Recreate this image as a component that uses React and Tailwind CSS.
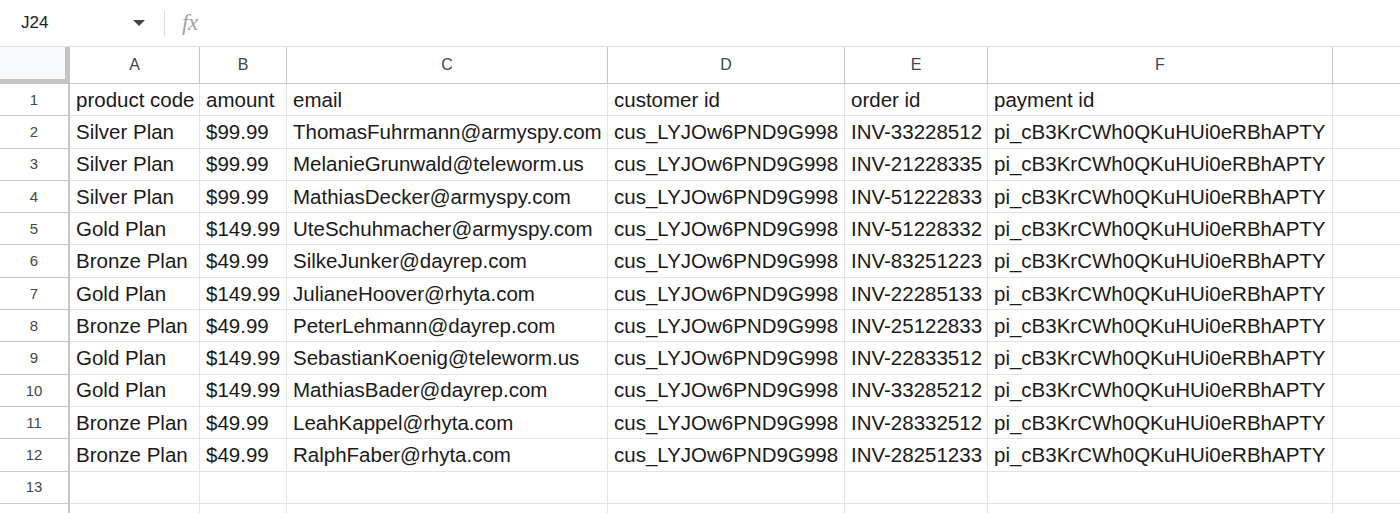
const columns = [
    { key: 'A', width: 'w-[130px]' },
    { key: 'B', width: 'w-[87px]' },
    { key: 'C', width: 'w-[321px]' },
    { key: 'D', width: 'w-[237px]' },
    { key: 'E', width: 'w-[143px]' },
    { key: 'F', width: 'w-[345px]' },
];

const rows = [
    ['product code', 'amount', 'email', 'customer id', 'order id', 'payment id'],
    ['Silver Plan', '$99.99', 'ThomasFuhrmann@armyspy.com', 'cus_LYJOw6PND9G998', 'INV-33228512', 'pi_cB3KrCWh0QKuHUi0eRBhAPTY'],
    ['Silver Plan', '$99.99', 'MelanieGrunwald@teleworm.us', 'cus_LYJOw6PND9G998', 'INV-21228335', 'pi_cB3KrCWh0QKuHUi0eRBhAPTY'],
    ['Silver Plan', '$99.99', 'MathiasDecker@armyspy.com', 'cus_LYJOw6PND9G998', 'INV-51222833', 'pi_cB3KrCWh0QKuHUi0eRBhAPTY'],
    ['Gold Plan', '$149.99', 'UteSchuhmacher@armyspy.com', 'cus_LYJOw6PND9G998', 'INV-51228332', 'pi_cB3KrCWh0QKuHUi0eRBhAPTY'],
    ['Bronze Plan', '$49.99', 'SilkeJunker@dayrep.com', 'cus_LYJOw6PND9G998', 'INV-83251223', 'pi_cB3KrCWh0QKuHUi0eRBhAPTY'],
    ['Gold Plan', '$149.99', 'JulianeHoover@rhyta.com', 'cus_LYJOw6PND9G998', 'INV-22285133', 'pi_cB3KrCWh0QKuHUi0eRBhAPTY'],
    ['Bronze Plan', '$49.99', 'PeterLehmann@dayrep.com', 'cus_LYJOw6PND9G998', 'INV-25122833', 'pi_cB3KrCWh0QKuHUi0eRBhAPTY'],
    ['Gold Plan', '$149.99', 'SebastianKoenig@teleworm.us', 'cus_LYJOw6PND9G998', 'INV-22833512', 'pi_cB3KrCWh0QKuHUi0eRBhAPTY'],
    ['Gold Plan', '$149.99', 'MathiasBader@dayrep.com', 'cus_LYJOw6PND9G998', 'INV-33285212', 'pi_cB3KrCWh0QKuHUi0eRBhAPTY'],
    ['Bronze Plan', '$49.99', 'LeahKappel@rhyta.com', 'cus_LYJOw6PND9G998', 'INV-28332512', 'pi_cB3KrCWh0QKuHUi0eRBhAPTY'],
    ['Bronze Plan', '$49.99', 'RalphFaber@rhyta.com', 'cus_LYJOw6PND9G998', 'INV-28251233', 'pi_cB3KrCWh0QKuHUi0eRBhAPTY'],
    ['', '', '', '', '', ''],
    ['', '', '', '', '', ''],
];

const FormulaBar = () => (
    <div className="flex items-center h-[47px] border-b border-[#e1e1e1] bg-white">
        <div className="w-[120px] pl-[21px] text-[17px] text-[#202124]">J24</div>
        <svg width="12" height="6" viewBox="0 0 12 6" className="ml-[13px]">
            <path d="M0 0 L12 0 L6 6 Z" fill="#444746" />
        </svg>
        <div className="ml-[19px] w-px h-[25px] bg-[#dadce0]"></div>
        <span className="ml-[17px] text-[23px] italic text-[#a0a4a8] [font-family:'Liberation_Serif',serif] tracking-[-0.5px]">
            fx
        </span>
    </div>
);

const HeaderRow = () => (
    <div className="flex h-[37px]">
        <div className="w-[70px] shrink-0 bg-[#f8f9fa] border-r-[5px] border-b-[5px] border-[#c4c4c4]"></div>
        {columns.map((col) => (
            <div
                key={col.key}
                className={`${col.width} shrink-0 flex items-center justify-center border-r border-b border-[#c7c7c7] text-[16px] text-[#444746]`}
            >
                {col.key}
            </div>
        ))}
        <div className="flex-1 border-b border-[#c7c7c7]"></div>
    </div>
);

const App = () => {
    return (
        <div className="w-[1400px] h-[513px] overflow-hidden bg-white [font-family:'Liberation_Sans',Arial,sans-serif]">
            <FormulaBar />
            <HeaderRow />
            {rows.map((row, idx) => (
                <div key={idx} className="flex h-[32.3px]">
                    <div className="w-[70px] shrink-0 flex items-center justify-center pt-[1px] border-r-[2px] border-b border-[#c7c7c7] text-[15px] text-[#444746]">
                        {idx + 1}
                    </div>
                    {columns.map((col, cIdx) => (
                        <div
                            key={col.key}
                            className={`${col.width} shrink-0 flex items-center pl-[6px] pt-[1px] border-r border-b border-[#e2e3e3] text-[20.5px] text-[#1a1a1a] whitespace-nowrap overflow-hidden`}
                        >
                            {row[cIdx]}
                        </div>
                    ))}
                    <div className="flex-1 border-b border-[#e2e3e3]"></div>
                </div>
            ))}
        </div>
    );
};

export default App;
